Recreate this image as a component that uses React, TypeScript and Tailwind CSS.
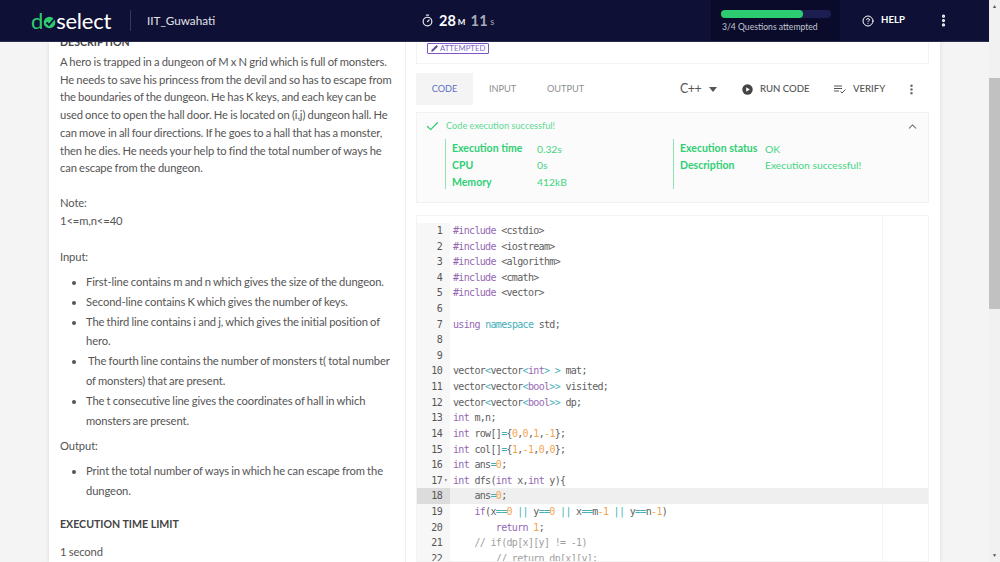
import { Check, ChevronUp, EllipsisVertical, CircleHelp, Pencil, Timer } from "lucide-react"

const kw = "text-[#9467b3]"
const op = "text-[#45aeb9]"
const num = "text-[#f5a34f]"
const com = "text-[#a0a0a0]"

type Tok = string | [string, string]

const codeLines: Tok[][] = [
    [["#include", kw], " <cstdio>"],
    [["#include", kw], " <iostream>"],
    [["#include", kw], " <algorithm>"],
    [["#include", kw], " <cmath>"],
    [["#include", kw], " <vector>"],
    [],
    [["using", kw], " ", ["namespace", op], " std;"],
    [],
    [],
    ["vector", ["<", op], "vector", ["<", op], ["int", kw], ["> >", op], " mat;"],
    ["vector", ["<", op], "vector", ["<", op], ["bool", kw], [">>", op], " visited;"],
    ["vector", ["<", op], "vector", ["<", op], ["bool", kw], [">>", op], " dp;"],
    [["int", kw], " m,n;"],
    [["int", kw], " row[]", ["=", op], "{", ["0", num], ",", ["0", num], ",", ["1", num], ",", ["-1", num], "};"],
    [["int", kw], " col[]", ["=", op], "{", ["1", num], ",", ["-1", num], ",", ["0", num], ",", ["0", num], "};"],
    [["int", kw], " ans", ["=", op], ["0", num], ";"],
    [["int", kw], " dfs(", ["int", kw], " x,", ["int", kw], " y){"],
    ["    ans", ["=", op], ["0", num], ";"],
    ["    ", ["if", kw], "(x", ["==", op], ["0", num], " ", ["||", op], " y", ["==", op], ["0", num], " ", ["||", op], " x", ["==", op], "m", ["-1", num], " ", ["||", op], " y", ["==", op], "n", ["-1", num], ")"],
    ["        ", ["return", kw], " ", ["1", num], ";"],
    [["    // if(dp[x][y] != -1)", com]],
    [["        // return dp[x][y];", com]],
]

const Logo = () => (
    <div className="flex items-center text-[22px] leading-none font-normal tracking-[-0.2px] text-white">
        <span className="text-[#2ecc71]">d</span>
        <svg width="13" height="13" viewBox="0 0 13 13" className="mt-[4px]">
            <circle cx="6.5" cy="6.5" r="5.8" fill="#2ecc71" />
            <path d="M3.5 6.5 L6 9 L11.5 2.5" stroke="#0f1035" strokeWidth="1.8" fill="none" />
        </svg>
        <span>select</span>
    </div>
)

const Header = () => (
    <div className="h-[42px] shrink-0 flex items-stretch bg-[#0f1035] border-b border-[#2b2c52] text-white">
        <div className="w-[130px] pl-[31px] flex items-center"><Logo /></div>
        <div className="w-px h-[21px] self-center bg-[#34365c]" />
        <div className="ml-[16px] w-[274px] flex items-center text-[11.7px] text-[#e2e3ea]">IIT_Guwahati</div>
        <div className="w-[290px] flex items-center">
            <Timer size={13} className="text-[#e8e8ee]" strokeWidth={2.2} />
            <span className="ml-[5px] font-bold text-[14.5px]">28</span>
            <span className="ml-[2px] mt-[3px] text-[8px] font-bold">M</span>
            <span className="ml-[5px] font-bold text-[14.5px] text-[#a9abb8] tracking-[0.5px]">11</span>
            <span className="ml-[2px] mt-[3px] text-[9px] text-[#a9abb8]">s</span>
        </div>
        <div className="w-[129px] bg-[#0a0b2a] pl-[10px] pt-[10px]">
            <div className="w-[110px] h-[8px] rounded-full bg-[#1c1e52]">
                <div className="w-[82px] h-[8px] rounded-full bg-[#2ecc71]" />
            </div>
            <div className="mt-[3px] ml-px text-[8.6px] text-[#c4c6d2]">3/4 Questions attempted</div>
        </div>
        <div className="ml-[22px] flex items-center gap-[7px] text-[9.6px] font-bold">
            <CircleHelp size={12} /> HELP
        </div>
        <div className="ml-[31px] flex items-center"><EllipsisVertical size={15} strokeWidth={3} /></div>
    </div>
)

const Problem = () => (
    <div className="w-[357px] shrink-0 h-full overflow-hidden border-r border-[#eeeeee] pl-[11px] pr-[8px] text-[#555] text-[11.2px] tracking-[-0.1px] [word-spacing:-0.5px]">
        <div className="-mt-[7px] font-bold text-[#444] text-[10.6px] tracking-normal [word-spacing:0] leading-[14px]">DESCRIPTION</div>
        <p className="mt-[4px] leading-[17.7px]">
            A hero is trapped in a dungeon of M x N grid which is full of monsters. He needs to save his princess from the devil and so has to escape from the boundaries of the dungeon. He has K keys, and each key can be used once to open the hall door. He is located on (i,j) dungeon hall. He can move in all four directions. If he goes to a hall that has a monster, then he dies. He needs your help to find the total number of ways he can escape from the dungeon.
        </p>
        <p className="mt-[17px] leading-[18px]">Note:<br />1&lt;=m,n&lt;=40</p>
        <p className="mt-[18px] leading-[18px]">Input:</p>
        <ul className="mt-[6px] list-disc pl-[26px] leading-[19.8px]">
            <li>First-line contains m and n which gives the size of the dungeon.</li>
            <li>Second-line contains K which gives the number of keys.</li>
            <li>The third line contains i and j, which gives the initial position of hero.</li>
            <li>&nbsp;The fourth line contains the number of monsters t( total number of monsters) that are present.</li>
            <li>The t consecutive line gives the coordinates of hall in which monsters are present.</li>
        </ul>
        <p className="mt-[7px] leading-[18px]">Output:</p>
        <ul className="mt-[6px] list-disc pl-[26px] leading-[19.8px]">
            <li>Print the total number of ways in which he can escape from the dungeon.</li>
        </ul>
        <div className="mt-[16px] font-bold text-[#444] text-[10.6px] tracking-normal [word-spacing:0] leading-[14px]">EXECUTION TIME LIMIT</div>
        <p className="mt-[12px] leading-[18px]">1 second</p>
    </div>
)

const Toolbar = () => (
    <div className="mt-[9px] h-[32px] shrink-0 flex items-center text-[#8e8e8e] text-[9.2px]">
        <div className="w-[57px] h-full bg-[#f4f4f4] flex items-center justify-center text-[#5f6fc4]">CODE</div>
        <div className="ml-[16px] w-[27px]">INPUT</div>
        <div className="ml-[31px] w-[37px]">OUTPUT</div>
        <div className="ml-[96px] w-[20px] text-[12.5px] tracking-[-0.6px] text-[#555] mt-[1px]">C++</div>
        <svg width="8" height="5" viewBox="0 0 8 5" className="ml-[9px]"><path d="M0 0H8L4 5Z" fill="#555" /></svg>
        <svg width="11" height="11" viewBox="0 0 11 11" className="ml-[25px]">
            <circle cx="5.5" cy="5.5" r="5.2" fill="#444" />
            <path d="M4.2 3.2V7.8L7.8 5.5Z" fill="#fff" />
        </svg>
        <span className="ml-[7px] w-[48px] font-medium text-[9.6px] whitespace-nowrap text-[#555]">RUN CODE</span>
        <svg width="12" height="9" viewBox="0 0 12 9" className="ml-[26px]" stroke="#555" fill="none">
            <path d="M0 1H8M0 3.5H8M0 6H5M6.5 6.5L8 8L11.5 4.5" />
        </svg>
        <span className="ml-[7px] w-[32px] font-medium text-[9.6px] text-[#555]">VERIFY</span>
        <EllipsisVertical size={13} strokeWidth={2.6} className="ml-[20px] text-[#666]" />
    </div>
)

const Stat = ({ label, value }: { label: string; value: string }) => (
    <div className="flex h-[16.6px] items-center">
        <span className="w-[85px] font-bold text-[10.5px]">{label}</span>
        <span className="text-[10.3px] text-[#45d483]">{value}</span>
    </div>
)

const Result = () => (
    <div className="mt-[7px] h-[91px] shrink-0 bg-[#fbfbfb] border border-[#f1f1f1] text-[#2fcf75]">
        <div className="flex items-center h-[26px] pl-[8px] pr-[9px]">
            <Check size={15} strokeWidth={2} />
            <span className="ml-[6px] text-[9.2px] text-[#5cd994]">Code execution successful!</span>
            <ChevronUp size={13} className="ml-auto text-[#777]" />
        </div>
        <div className="flex">
            <div className="ml-[28px] w-[228px] border-l border-[#8fe3b4] pl-[6px] pt-[2px] h-[50px]">
                <Stat label="Execution time" value="0.32s" />
                <Stat label="CPU" value="0s" />
                <Stat label="Memory" value="412kB" />
            </div>
            <div className="border-l border-[#8fe3b4] pl-[6px] pt-[2px] h-[50px]">
                <Stat label="Execution status" value="OK" />
                <Stat label="Description" value="Execution successful!" />
            </div>
        </div>
    </div>
)

const Editor = () => (
    <div className="mt-[12px] flex-1 min-h-0 border border-[#f3f3f3] overflow-hidden pt-[7px] relative font-['DejaVu_Sans_Mono',monospace] text-[10px] tracking-[-0.67px]">
        <div className="absolute top-0 bottom-0 left-[465px] w-px bg-[#f3f3f3]" />
        {codeLines.map((line, i) => (
            <div key={i} className={`relative flex h-[15.62px] leading-[15.62px] ${i == 17 ? "bg-[#efefef]" : ""}`}>
                <div className={`w-[33px] shrink-0 pr-[8px] text-right text-[#555] ${i == 17 ? "bg-[#dcdcdc]" : "bg-[#f7f7f7]"}`}>
                    {i + 1}
                    {i == 16 && <span className="absolute left-[27px] top-[-1px] text-[6px] text-[#777]">▾</span>}
                </div>
                <pre className="pl-[3px] font-['DejaVu_Sans_Mono',monospace] text-[#5e5e5e]">
                    {line.map((t, j) => typeof t == "string" ? <span key={j}>{t}</span> : <span key={j} className={t[1]}>{t[0]}</span>)}
                </pre>
            </div>
        ))}
    </div>
)

const Workspace = () => (
    <div className="flex-1 min-w-0 h-full flex flex-col pl-[10px] pr-[11px]">
        <div className="h-[22px] shrink-0 border border-t-0 border-[#f3f3f3] flex items-start pl-[10px]">
            <div className="mt-[1px] h-[11px] px-[3px] flex items-center gap-[2px] border border-[#7e57c2] rounded-[1px] text-[7.8px] text-[#7e69c9]">
                <Pencil size={7} className="fill-[#5b4a9c] text-[#5b4a9c]" /> ATTEMPTED
            </div>
        </div>
        <Toolbar />
        <Result />
        <Editor />
    </div>
)

const Scrollbar = () => (
    <div className="w-[11px] shrink-0 h-full flex flex-col items-center bg-[#f1f1f1]">
        <div className="h-[13px] flex items-center text-[5px] text-[#505050]">▲</div>
        <div className="mt-[65px] w-full h-[231px] bg-[#c1c1c1]" />
        <div className="mt-auto h-[13px] flex items-center text-[5px] text-[#505050]">▼</div>
    </div>
)

export default function App() {
    return (
        <div className="h-[562px] w-[1000px] flex overflow-hidden font-['Lato',sans-serif]">
            <div className="flex-1 min-w-0 flex flex-col bg-[#f4f4f4]">
                <Header />
                <div className="flex-1 min-h-0 pl-[49px] pr-[49px]">
                    <div className="h-full flex bg-white shadow-[0_0_4px_rgba(0,0,0,0.12)] overflow-hidden">
                        <Problem />
                        <Workspace />
                    </div>
                </div>
            </div>
            <Scrollbar />
        </div>
    )
}
